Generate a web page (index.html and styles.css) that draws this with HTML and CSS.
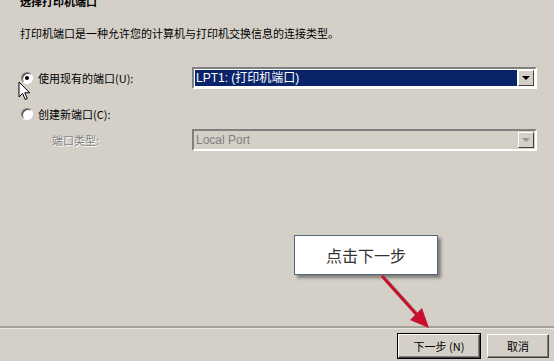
FILE: index.html
```html
<!DOCTYPE html>
<html lang="zh-CN">
<head>
    <meta charset="UTF-8" />
    <title>添加打印机</title>
    <link rel="stylesheet" href="styles.css">
</head>
<body>
    <div class="wizard">
        <div class="content">
            <h1 class="title">选择打印机端口</h1>
            <p class="desc">打印机端口是一种允许您的计算机与打印机交换信息的连接类型。</p>

            <div class="row first">
                <label class="radio"><span class="dot checked"></span>使用现有的端口(U):</label>
                <div class="combo">
                    <span class="value selected">LPT1: (打印机端口)</span>
                    <span class="drop"><span class="tri"></span></span>
                </div>
            </div>

            <div class="row second">
                <label class="radio"><span class="dot"></span>创建新端口(C):</label>
            </div>

            <div class="row third">
                <span class="sub-label">端口类型:</span>
                <div class="combo disabled">
                    <span class="value">Local Port</span>
                    <span class="drop"><span class="tri"></span></span>
                </div>
            </div>
        </div>

        <div class="footer">
            <button class="btn default">下一步 (N)</button>
            <button class="btn">取消</button>
        </div>

        <!-- annotation drawn on top of the dialog -->
        <div class="callout">点击下一步</div>
        <svg class="arrow" width="554" height="361" viewBox="0 0 554 361">
            <line x1="384" y1="278" x2="420" y2="318" stroke="rgba(0,0,0,0.25)" stroke-width="4" transform="translate(2,2)" />
            <line x1="382" y1="276" x2="418" y2="316" stroke="#c8102e" stroke-width="3" />
            <polygon points="429,328 410,320 422,308" fill="#c8102e" />
        </svg>
        <svg class="cursor" width="14" height="21" viewBox="0 0 14 21">
            <path d="M1 1 L1 16 L4.6 12.4 L7.2 18.5 L9.3 17.6 L6.8 11.8 L11.6 11.8 Z" fill="#fff" stroke="#000" stroke-width="1" stroke-linejoin="round" />
        </svg>
    </div>
</body>
</html>
```

FILE: styles.css
```css
body {
    margin: 0;
    background-color: #d4d0c8;
    font-family: "Noto Sans CJK SC", "DejaVu Sans", sans-serif;
    font-size: 11px;
    color: #000;
}
.wizard {
    position: relative;
    width: 554px;
    height: 361px;
    display: flex;
    flex-direction: column;
    overflow: hidden;
}
.content {
    flex: 1;
    padding: 0 17px 0 20px;
}
.title {
    margin: -6px 0 0 0;
    font-size: 11px;
    line-height: 14px;
    font-weight: 700;
}
.desc {
    margin: 18px 0 0 0;
    line-height: 14px;
}
.row {
    display: flex;
    align-items: center;
}
.row.first {
    margin-top: 27px;
}
.row.second {
    margin-top: 18px;
    height: 14px;
}
.row.third {
    margin-top: 8px;
}
.radio {
    width: 172px;
    display: flex;
    align-items: center;
    gap: 5px;
    line-height: 14px;
}
.dot {
    width: 10px;
    height: 10px;
    border-radius: 50%;
    background: #fff;
    border: 1px solid #808080;
    border-right-color: #fff;
    border-bottom-color: #fff;
    box-shadow: inset 1px 1px 0 #404040;
    position: relative;
    margin-left: 1px;
}
.dot.checked::after {
    content: "";
    position: absolute;
    left: 3px;
    top: 3px;
    width: 4px;
    height: 4px;
    border-radius: 50%;
    background: #000;
}
.sub-label {
    width: 140px;
    padding-left: 32px;
    color: #808080;
    text-shadow: 1px 1px 0 #fff;
}
.combo {
    width: 345px;
    height: 22px;
    box-sizing: border-box;
    border: 2px solid;
    border-color: #808080 #fff #fff #808080;
    background: #fff;
    display: flex;
    padding: 1px;
}
.combo .value {
    flex: 1;
    padding-left: 1px;
    line-height: 16px;
    font-family: "Liberation Sans", "Noto Sans CJK SC", sans-serif;
    font-size: 12px;
}
.combo .selected {
    background: #0a246a;
    color: #fff;
    margin-right: 1px;
}
.combo.disabled {
    background: #d4d0c8;
}
.combo.disabled .value {
    color: #808080;
}
.drop {
    width: 16px;
    height: 16px;
    box-sizing: border-box;
    border: 1px solid;
    border-color: #fff #404040 #404040 #fff;
    background: #d4d0c8;
    display: flex;
    align-items: center;
    justify-content: center;
}
.tri {
    width: 0;
    height: 0;
    border-left: 4px solid transparent;
    border-right: 4px solid transparent;
    border-top: 4px solid #000;
}
.disabled .tri {
    border-top-color: #9a968e;
}
.footer {
    height: 35px;
    box-sizing: border-box;
    border-top: 2px solid #a6a29a;
    box-shadow: inset 0 1px 0 #e8e6e0;
    display: flex;
    justify-content: flex-end;
    align-items: center;
    gap: 7px;
    padding: 2px 5px 0 0;
}
.btn {
    height: 24px;
    font-family: "Noto Sans CJK SC", sans-serif;
    font-size: 11px;
    background: #d4d0c8;
    border: 1px solid;
    border-color: #fff #404040 #404040 #fff;
    box-shadow: inset -1px -1px 0 #808080;
    padding: 0;
    width: 62px;
    color: #000;
}
.btn.default {
    width: 82px;
    outline: 1px solid #000;
}
.callout {
    position: absolute;
    left: 294px;
    top: 235px;
    width: 144px;
    height: 40px;
    box-sizing: border-box;
    background: #fff;
    border: 1px solid #55677f;
    box-shadow: 3px 3px 3px rgba(0, 0, 0, 0.4);
    display: flex;
    align-items: center;
    justify-content: center;
    font-size: 16px;
    color: #333;
}
.arrow {
    position: absolute;
    left: 0;
    top: 0;
    pointer-events: none;
}
.cursor {
    position: absolute;
    left: 18px;
    top: 81px;
}
```
